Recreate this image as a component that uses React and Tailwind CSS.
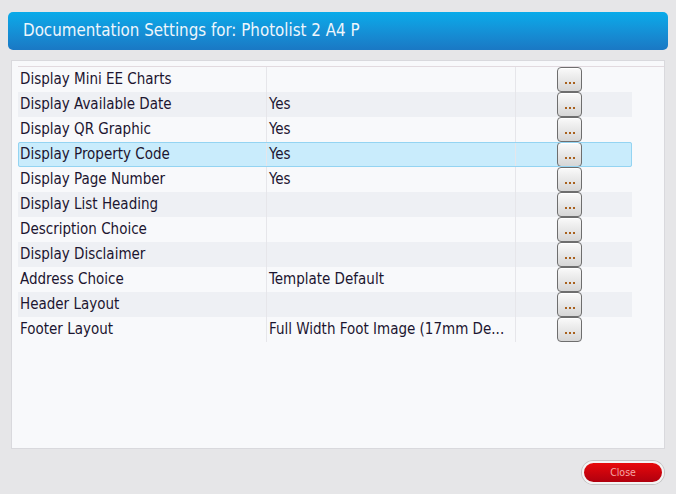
import React from 'react';

const rows = [
  { label: 'Display Mini EE Charts', value: '' },
  { label: 'Display Available Date', value: 'Yes' },
  { label: 'Display QR Graphic', value: 'Yes' },
  { label: 'Display Property Code', value: 'Yes', selected: true },
  { label: 'Display Page Number', value: 'Yes' },
  { label: 'Display List Heading', value: '' },
  { label: 'Description Choice', value: '' },
  { label: 'Display Disclaimer', value: '' },
  { label: 'Address Choice', value: 'Template Default' },
  { label: 'Header Layout', value: '' },
  { label: 'Footer Layout', value: 'Full Width Foot Image (17mm De...' },
];

function DotsButton() {
  return (
    <button className="w-[25px] h-[25px] rounded-[4px] border border-[#6e6e6e] bg-gradient-to-b from-[#fafafa] to-[#d6d6d6] flex items-end justify-center gap-[2px] pb-[7px] shadow-[inset_0_1px_0_#ffffff]">
      <span className="w-[2px] h-[2px] bg-[#a8601c]" />
      <span className="w-[2px] h-[2px] bg-[#a8601c]" />
      <span className="w-[2px] h-[2px] bg-[#a8601c]" />
    </button>
  );
}

export default function App() {
  return (
    <div
      className="w-[676px] h-[494px] bg-[#e6e6e8] flex flex-col"
      style={{ fontFamily: '"DejaVu Sans Condensed", "DejaVu Sans", sans-serif' }}
    >
      {/* Title bar */}
      <div className="mx-[8px] mt-[12px] h-[38px] rounded-[5px] bg-gradient-to-b from-[#08abea] to-[#1a78c4] flex items-center pl-[15px] text-[16.8px] text-[#eef6fc]">
        Documentation Settings for: Photolist 2 A4 P
      </div>

      {/* Settings panel */}
      <div className="mx-[11px] mt-[10px] h-[389px] border border-[#d9d9dd] bg-[#f8f9fb] pt-[5px] pl-[6px]">
        <div className="border-t border-[#e2dadf]">
          {rows.map((row, i) => (
            <div
              key={row.label}
              className={`w-[614px] h-[25px] flex text-[15px] text-[#1c1530] ${
                row.selected
                  ? 'bg-[#c9ecfc] outline outline-[#94d4f2] -outline-offset-1 rounded-[2px]'
                  : i % 2 === 1
                  ? 'bg-[#eef0f4]'
                  : ''
              }`}
            >
              <div className="w-[249px] border-r border-[#e6e6ea] pl-[2px] flex items-center whitespace-nowrap">
                {row.label}
              </div>
              <div className="w-[249px] border-r border-[#e6e6ea] pl-[2px] flex items-center whitespace-nowrap">
                {row.value}
              </div>
              <div className="flex-1 pl-[41px] flex items-center">
                <DotsButton />
              </div>
            </div>
          ))}
        </div>
      </div>

      {/* Footer */}
      <div className="flex-1 flex items-start justify-end pr-[12px] pt-[12px]">
        <button className="w-[82px] h-[23px] rounded-full border-2 border-[#f4f4f4] shadow-[0_0_0_1px_#c4c4c4] bg-gradient-to-b from-[#e80a0a] to-[#b0000e] text-[10.5px] text-[#f3a6a6] flex items-center justify-center">
          Close
        </button>
      </div>
    </div>
  );
}
